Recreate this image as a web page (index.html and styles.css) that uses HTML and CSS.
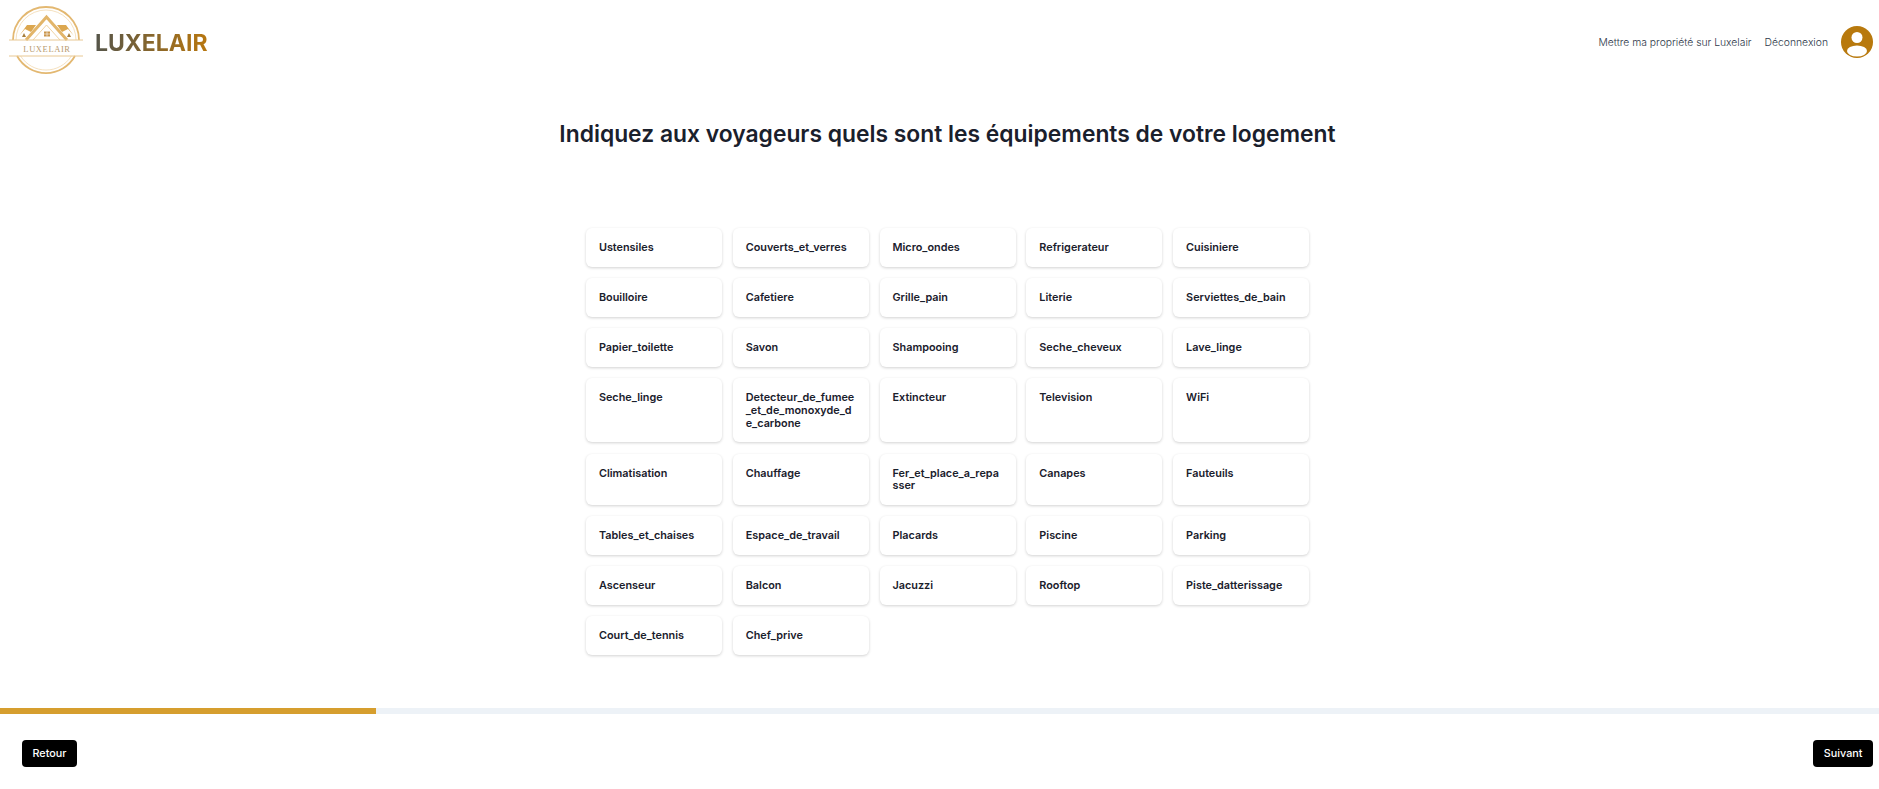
FILE: index.html
```html
<!DOCTYPE html>
<html lang="fr">
<head>
    <meta charset="UTF-8">
    <meta name="viewport" content="width=device-width, initial-scale=1.0">
    <title>Luxelair</title>
    <link rel="stylesheet" href="styles.css">
</head>
<body>
    <header class="topbar">
        <a class="brand" href="#">
            <svg class="brand-logo" viewBox="0 0 84 84" width="84" height="84">
                <!-- ring, cut by the white band -->
                <path d="M13 40 A 33 33 0 0 1 79 40" fill="none" stroke="#e3b871" stroke-width="1.800"/>
                <path d="M16 40 A 30 30 0 0 1 76 40" fill="none" stroke="#efd3a4" stroke-width="0.700"/>
                <path d="M17.100 56 A 33 33 0 0 0 74.900 56" fill="none" stroke="#e3b871" stroke-width="1.800"/>
                <path d="M20.600 56 A 30 30 0 0 0 71.400 56" fill="none" stroke="#efd3a4" stroke-width="0.700"/>
                <!-- side roofs -->
                <path d="M19 36 L27 25 L36 25 L31 32 L25 29 Z" fill="#dca74f"/>
                <path d="M74 36 L66 25 L57 25 L62 32 L68 29 Z" fill="#dca74f"/>
                <path d="M22 37 L24 33 L26 37 Z M67 37 L69 33 L71 37 Z" fill="#a87f3c"/>
                <!-- main roof -->
                <polyline points="26,40 46.500,17 67,40" fill="none" stroke="#e2b56a" stroke-width="3"/>
                <polyline points="33,40 46.500,25 60,40" fill="none" stroke="#efd3a4" stroke-width="1"/>
                <path d="M44 31.500 H50 V36.500 H44 Z" fill="#c9954a"/>
                <path d="M47 31.500 V36.500 M44 34 H50" stroke="white" stroke-width="0.600"/>
                <!-- band -->
                <path d="M9 40 H83 M9 56 H83" stroke="#e8c893" stroke-width="1"/>
                <text class="brand-logo-text" x="47" y="51.500" text-anchor="middle">LUXELAIR</text>
            </svg>
            <span class="brand-name">LUXELAIR</span>
        </a>
        <nav class="topnav">
            <a href="#">Mettre ma propriété sur Luxelair</a>
            <a href="#">Déconnexion</a>
            <svg class="avatar" viewBox="0 0 32 32" width="32" height="32">
                <defs>
                    <clipPath id="avatarClip"><circle cx="16" cy="16" r="16"/></clipPath>
                </defs>
                <circle cx="16" cy="16" r="16" fill="#b8790d"/>
                <circle cx="16" cy="11.500" r="5.500" fill="#fff"/>
                <ellipse cx="16" cy="25" rx="10" ry="5.500" fill="#fff" clip-path="url(#avatarClip)"/>
            </svg>
        </nav>
    </header>

    <main class="content">
        <h1>Indiquez aux voyageurs quels sont les équipements de votre logement</h1>

        <div class="amenities">
            <div class="amenity">Ustensiles</div>
            <div class="amenity">Couverts_et_verres</div>
            <div class="amenity">Micro_ondes</div>
            <div class="amenity">Refrigerateur</div>
            <div class="amenity">Cuisiniere</div>

            <div class="amenity">Bouilloire</div>
            <div class="amenity">Cafetiere</div>
            <div class="amenity">Grille_pain</div>
            <div class="amenity">Literie</div>
            <div class="amenity">Serviettes_de_bain</div>

            <div class="amenity">Papier_toilette</div>
            <div class="amenity">Savon</div>
            <div class="amenity">Shampooing</div>
            <div class="amenity">Seche_cheveux</div>
            <div class="amenity">Lave_linge</div>

            <div class="amenity">Seche_linge</div>
            <div class="amenity">Detecteur_de_fumee_et_de_monoxyde_de_carbone</div>
            <div class="amenity">Extincteur</div>
            <div class="amenity">Television</div>
            <div class="amenity">WiFi</div>

            <div class="amenity">Climatisation</div>
            <div class="amenity">Chauffage</div>
            <div class="amenity">Fer_et_place_a_repasser</div>
            <div class="amenity">Canapes</div>
            <div class="amenity">Fauteuils</div>

            <div class="amenity">Tables_et_chaises</div>
            <div class="amenity">Espace_de_travail</div>
            <div class="amenity">Placards</div>
            <div class="amenity">Piscine</div>
            <div class="amenity">Parking</div>

            <div class="amenity">Ascenseur</div>
            <div class="amenity">Balcon</div>
            <div class="amenity">Jacuzzi</div>
            <div class="amenity">Rooftop</div>
            <div class="amenity">Piste_datterissage</div>

            <div class="amenity">Court_de_tennis</div>
            <div class="amenity">Chef_prive</div>
        </div>
    </main>

    <div class="progress">
        <div class="progress-fill" style="width: 20%"></div>
    </div>

    <footer class="actions">
        <button type="button">Retour</button>
        <button type="button">Suivant</button>
    </footer>
</body>
</html>
```

FILE: styles.css
```css
* {
    box-sizing: border-box;
}

body {
    margin: 0;
    font-family: Inter, "Liberation Sans", sans-serif;
    color: #1a202c;
    background-color: white;
}

a {
    color: inherit;
    text-decoration: none;
}

.topbar {
    display: flex;
    justify-content: space-between;
    align-items: center;
    height: 84px;
    padding-right: 6px;
}

.brand {
    display: flex;
    align-items: center;
    gap: 11px;
}

.brand-logo {
    display: block;
}

.brand-logo-text {
    font-family: "Liberation Serif", serif;
    font-size: 8.500px;
    letter-spacing: 0.6px;
    fill: #b89a6f;
}

.brand-name {
    margin-top: 2px;
    font-size: 23px;
    font-weight: 700;
    background: linear-gradient(90deg, #55554a, #b8770f);
    -webkit-background-clip: text;
    background-clip: text;
    color: transparent;
}

.topnav {
    display: flex;
    align-items: center;
    gap: 13px;
    font-size: 10.350px;
    font-weight: 300;
    color: #2d3748;
}

.avatar {
    display: block;
}

.content {
    display: flex;
    flex-direction: column;
    align-items: center;
    padding-left: 16px;
}

h1 {
    margin: 34px 0 0;
    font-size: 22.850px;
    line-height: 32px;
    font-weight: 600;
    text-align: center;
}

.amenities {
    display: grid;
    grid-template-columns: repeat(5, 136px);
    gap: 11.200px 10.800px;
    margin-top: 78px;
}

.amenity {
    padding: 13px;
    border-radius: 6px;
    background-color: white;
    box-shadow: 0 1px 3px rgba(0, 0, 0, 0.18);
    font-size: 10.850px;
    line-height: 12.800px;
    font-weight: 600;
    overflow-wrap: anywhere;
}

.progress {
    height: 6px;
    margin-top: 53px;
    background-color: #edf2f7;
}

.progress-fill {
    height: 100%;
    background-color: #d69e2e;
}

.actions {
    display: flex;
    justify-content: space-between;
    padding: 26px 6px 0 22px;
}

.actions button {
    height: 27px;
    padding: 0 10.500px;
    border: none;
    border-radius: 4px;
    background-color: black;
    color: white;
    font-family: inherit;
    font-size: 10.800px;
    font-weight: 500;
}
```
